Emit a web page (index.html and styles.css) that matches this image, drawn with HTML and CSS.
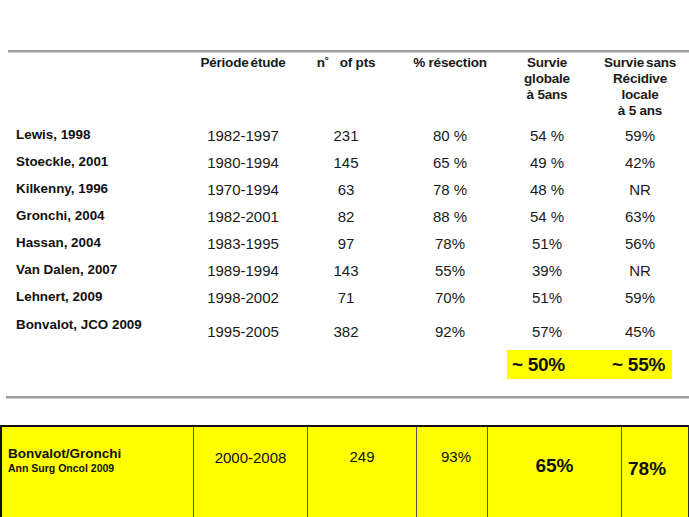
FILE: index.html
```html
<!DOCTYPE html>
<html lang="fr">
<head>
<meta charset="utf-8">
<title>Survie</title>
<link rel="stylesheet" href="styles.css">
</head>
<body>
<div class="slide">
  <div class="rule rule-top"></div>
  <div class="grid">
    <div class="hd"></div>
    <div class="hd"><span class="tight">Période étude</span></div>
    <div class="hd">n˚&nbsp;&nbsp;&nbsp;of pts</div>
    <div class="hd">% résection</div>
    <div class="hd">Survie<br>globale<br>à 5ans</div>
    <div class="hd"><span class="tight">Survie sans</span><br>Récidive<br>locale<br>à 5 ans</div>

    <div class="nm">Lewis, 1998</div><div class="dt">1982-1997</div><div class="dt">231</div><div class="dt">80 %</div><div class="dt">54 %</div><div class="dt">59%</div>
    <div class="nm">Stoeckle, 2001</div><div class="dt">1980-1994</div><div class="dt">145</div><div class="dt">65 %</div><div class="dt">49 %</div><div class="dt">42%</div>
    <div class="nm">Kilkenny, 1996</div><div class="dt">1970-1994</div><div class="dt">63</div><div class="dt">78 %</div><div class="dt">48 %</div><div class="dt">NR</div>
    <div class="nm">Gronchi, 2004</div><div class="dt">1982-2001</div><div class="dt">82</div><div class="dt">88 %</div><div class="dt">54 %</div><div class="dt">63%</div>
    <div class="nm">Hassan, 2004</div><div class="dt">1983-1995</div><div class="dt">97</div><div class="dt">78%</div><div class="dt">51%</div><div class="dt">56%</div>
    <div class="nm">Van Dalen, 2007</div><div class="dt">1989-1994</div><div class="dt">143</div><div class="dt">55%</div><div class="dt">39%</div><div class="dt">NR</div>
    <div class="nm">Lehnert, 2009</div><div class="dt">1998-2002</div><div class="dt">71</div><div class="dt">70%</div><div class="dt">51%</div><div class="dt">59%</div>
    <div class="nm last">Bonvalot, JCO 2009</div><div class="dt last">1995-2005</div><div class="dt last">382</div><div class="dt last">92%</div><div class="dt last">57%</div><div class="dt last">45%</div>
  </div>
  <div class="summary">
    <div class="hl"><span>~ 50%</span><span>~ 55%</span></div>
  </div>
  <div class="rule rule-bottom"></div>
  <div class="btable">
    <div class="bc first">
      <div class="bname">Bonvalot/Gronchi</div>
      <div class="bref">Ann Surg Oncol 2009</div>
    </div>
    <div class="bc period">2000-2008</div>
    <div class="bc num">249</div>
    <div class="bc pct">93%</div>
    <div class="bc big g">65%</div>
    <div class="bc big s">78%</div>
  </div>
</div>
</body>
</html>
```
FILE: styles.css
```css
html, body {
  margin: 0;
  padding: 0;
  background: #fff;
}
body {
  width: 689px;
  height: 517px;
  overflow: hidden;
  font-family: "Liberation Sans", Arial, sans-serif;
  color: #111;
}
.slide {
  width: 689px;
  height: 517px;
  overflow: hidden;
}
.rule {
  height: 2px;
  background: #9c9c9c;
  border-bottom: 1px solid #cfcfcf;
}
.rule-top {
  margin: 50px 0 0 8px;
}
.grid {
  display: grid;
  grid-template-columns: 170px 114px 92px 116px 78px 108px;
  grid-auto-rows: 27px;
  grid-template-rows: 67px;
  padding-left: 16px;
  margin-top: 2px;
  width: 700px;
}
.hd {
  font-weight: bold;
  font-size: 13.5px;
  line-height: 16px;
  text-align: center;
  letter-spacing: -0.2px;
  color: #1a1a1a;
}
.tight {
  word-spacing: -1.5px;
}
.nm {
  font-weight: bold;
  font-size: 13.4px;
  align-self: center;
  margin-top: -2px;
  color: #111;
}
.dt {
  font-size: 15px;
  text-align: center;
  align-self: center;
  color: #1a1a1a;
}
.nm.last {
  align-self: start;
  margin-top: 6px;
}
.dt.last {
  align-self: start;
  margin-top: 12px;
}
.grid .dt.last, .grid .nm.last {
  height: 20px;
}
.summary {
  display: flex;
  justify-content: flex-end;
  padding-right: 17px;
  margin-top: 12px;
}
.hl {
  background: #ffff00;
  width: 165px;
  height: 29px;
  display: flex;
  align-items: center;
  justify-content: space-between;
  padding: 0 7px 0 5px;
  box-sizing: border-box;
  font-weight: bold;
  font-size: 19px;
  color: #111;
  letter-spacing: -0.3px;
}
.rule-bottom {
  margin: 17px 0 0 6px;
}
.btable {
  margin-top: 26px;
  display: grid;
  grid-template-columns: 192px 114px 109px 71px 134px 68px;
  height: 100px;
  background: #ffff00;
  border-top: 2px solid #111;
  border-left: 2px solid #111;
  border-right: 1px solid #333;
  box-sizing: border-box;
  width: 689px;
}
.bc {
  border-right: 1px solid #555;
  text-align: center;
  color: #111;
}
.bc:last-child {
  border-right: none;
}
.first {
  text-align: left;
  padding: 19px 0 0 6px;
}
.bname {
  font-weight: bold;
  font-size: 13.5px;
  line-height: 15px;
}
.bref {
  font-weight: bold;
  font-size: 10.5px;
  line-height: 14px;
}
.period {
  font-size: 15px;
  padding-top: 22px;
}
.num, .pct {
  font-size: 15px;
  padding-top: 21px;
}
.pct {
  padding-left: 8px;
}
.big {
  font-weight: bold;
  font-size: 19px;
}
.g {
  padding-top: 28px;
}
.s {
  text-align: left;
  padding: 31px 0 0 6px;
}
```
